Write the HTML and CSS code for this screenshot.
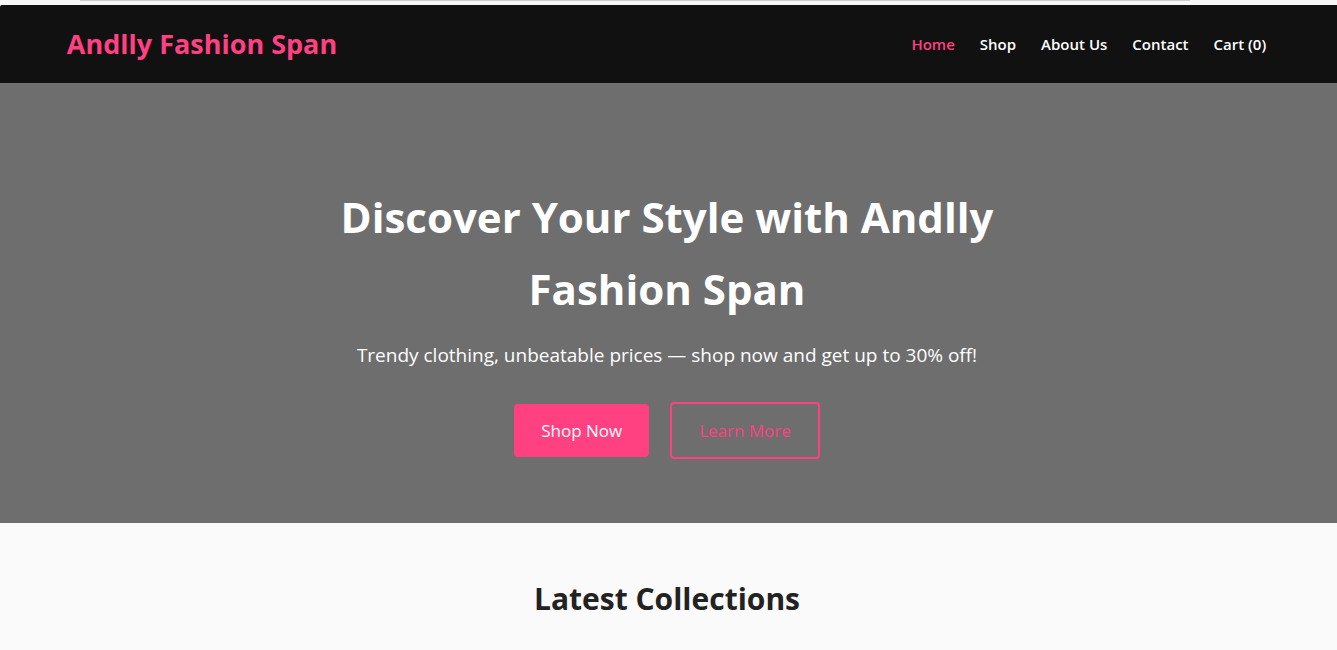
FILE: index.html
```html
<!DOCTYPE html>
<html lang="en">
<head>
<meta charset="utf-8">
<meta name="viewport" content="width=device-width, initial-scale=1">
<title>Andlly Fashion Span</title>
<link rel="stylesheet" href="styles.css">
</head>
<body>
<div class="browser-edge"><div class="address-bar"></div></div>
<header class="site-header">
  <div class="logo">Andlly Fashion Span</div>
  <nav class="site-nav">
    <a class="active" href="#">Home</a>
    <a href="#">Shop</a>
    <a href="#">About Us</a>
    <a href="#">Contact</a>
    <a href="#">Cart (0)</a>
  </nav>
</header>
<main>
  <section class="hero">
    <h1>Discover Your Style with Andlly Fashion Span</h1>
    <p>Trendy clothing, unbeatable prices — shop now and get up to 30% off!</p>
    <div class="actions">
      <a class="btn btn-primary" href="#">Shop Now</a>
      <a class="btn btn-outline" href="#">Learn More</a>
    </div>
  </section>
  <section class="collections">
    <h2>Latest Collections</h2>
  </section>
</main>
</body>
</html>
```

FILE: styles.css
```css
* { box-sizing: border-box; }

body {
  margin: 0;
  background: #fafafa;
  color: #222;
  font-family: "Segoe UI", "Open Sans", "Noto Sans", sans-serif;
  line-height: 1.6;
}

a { text-decoration: none; }

.browser-edge {
  height: 5px;
  padding: 0 11% 0 6%;
  background: #f7f7f7;
}

.address-bar {
  height: 1px;
  background: #ccc;
}

.site-header {
  display: flex;
  align-items: center;
  justify-content: space-between;
  padding: 16px 5%;
  border-top-left-radius: 2px;
  background: #111;
}

.logo {
  color: #ff4081;
  font-size: 27px;
  font-weight: 700;
  line-height: 46px;
}

.site-nav {
  display: flex;
  gap: 25px;
  padding-right: 4px;
}

.site-nav a {
  color: #fff;
  font-size: 15px;
  font-weight: 600;
}

.site-nav .active { color: #ff4081; }

.hero {
  display: flex;
  flex-direction: column;
  align-items: center;
  padding: 98px 23px 64px 20px;
  background: #6e6e6e;
  color: #fff;
  text-align: center;
}

.hero h1 {
  max-width: 700px;
  margin: 0 0 14px;
  font-size: 42px;
  font-weight: 700;
  line-height: 72px;
}

.hero p {
  margin: 0 0 31px;
  font-size: 19px;
  line-height: 32px;
}

.actions {
  display: flex;
  align-items: center;
  gap: 21px;
}

.btn {
  padding: 12px 27px;
  border-radius: 4px;
  font-size: 17px;
  line-height: 29px;
}

.btn-primary {
  background: #ff4081;
  color: #fff;
}

.btn-outline {
  border: 2px solid #ff4081;
  color: #ff4081;
}

.collections {
  padding: 48px 23px 48px 20px;
  text-align: center;
}

.collections h2 {
  margin: 0;
  font-size: 30px;
  font-weight: 700;
  line-height: 56px;
}
```
